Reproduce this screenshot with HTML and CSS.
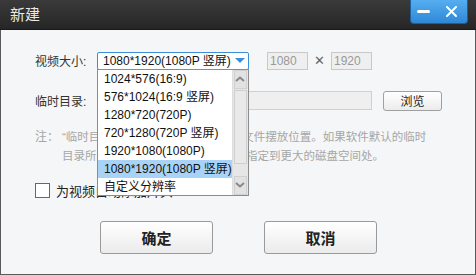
FILE: index.html
```html
<!DOCTYPE html>
<html lang="zh-CN">
<head>
    <meta charset="UTF-8">
    <title>新建</title>
    <link rel="stylesheet" href="styles.css">
</head>
<body>

<div class="window">
    <div class="titlebar">
        <div class="title">新建</div>
        <div class="title-buttons">
            <span class="btn-min"></span>
            <svg class="btn-close" width="11" height="11" viewBox="0 0 11 11">
                <path d="M1 1L10 10M10 1L1 10" stroke="#fff" stroke-width="2" stroke-linecap="round"/>
            </svg>
        </div>
    </div>

    <div class="content">
        <div class="row">
            <div class="label">视频大小:</div>
            <div class="select">
                <span class="select-text">1080*1920(1080P 竖屏)</span>
                <span class="select-arrow"></span>

                <div class="dropdown">
                    <ul class="options">
                        <li>1024*576(16:9)</li>
                        <li>576*1024(16:9 竖屏)</li>
                        <li>1280*720(720P)</li>
                        <li>720*1280(720P 竖屏)</li>
                        <li>1920*1080(1080P)</li>
                        <li class="selected">1080*1920(1080P 竖屏)</li>
                        <li>自定义分辨率</li>
                    </ul>
                    <div class="scrollbar">
                        <div class="scroll-btn">
                            <svg width="10" height="6" viewBox="0 0 10 6"><path d="M1 5L5 1.5L9 5" fill="none" stroke="#888" stroke-width="2"/></svg>
                        </div>
                        <div class="scroll-thumb"></div>
                        <div class="scroll-track"></div>
                        <div class="scroll-btn">
                            <svg width="10" height="6" viewBox="0 0 10 6"><path d="M1 1L5 4.5L9 1" fill="none" stroke="#888" stroke-width="2"/></svg>
                        </div>
                    </div>
                </div>
            </div>
            <div class="size-box">1080</div>
            <div class="times">✕</div>
            <div class="size-box">1920</div>
        </div>

        <div class="row row-dir">
            <div class="label">临时目录:</div>
            <div class="dir-input"></div>
            <button class="browse">浏览</button>
        </div>

        <div class="note">
            <div class="note-head">注：</div>
            <div class="note-text">“临时目录”是视频合成过程中的临时文件摆放位置。如果软件默认的临时<br>目录所在的磁盘空间不够时，请将其指定到更大的磁盘空间处。</div>
        </div>

        <div class="check-row">
            <span class="checkbox"></span>
            <span class="check-label">为视频自动添加片头</span>
        </div>

        <div class="actions">
            <button class="action">确定</button>
            <button class="action">取消</button>
        </div>
    </div>
</div>

</body>
</html>
```

FILE: styles.css
```css
body {
    margin: 0;
    font-family: "Liberation Sans", "Noto Sans CJK SC", sans-serif;
    font-size: 12px;
    background-color: #ffffff;
}

.window {
    width: 476px;
    height: 275px;
    box-sizing: border-box;
    border: 1px solid #5a5a5a;
    border-top: none;
    background-color: #f5f6f7;
    display: flex;
    flex-direction: column;
}

/* Title bar */
.titlebar {
    height: 29px;
    margin: 0 -1px;
    background: linear-gradient(#3a3a3a, #262626);
    border-bottom: 1px solid #1a1a1a;
    display: flex;
    align-items: flex-start;
    flex-shrink: 0;
}

.title {
    color: #e8e8e8;
    font-size: 15px;
    line-height: 29px;
    padding-left: 10px;
}

.title-buttons {
    margin-left: auto;
    margin-right: 8px;
    width: 58px;
    height: 24px;
    box-sizing: border-box;
    border: 1px solid #1f5f99;
    border-top: none;
    border-radius: 0 0 4px 4px;
    background: linear-gradient(#56aef0, #2e88d6);
    display: flex;
    align-items: center;
    padding-left: 6px;
}

.btn-min {
    width: 13px;
    height: 3px;
    border-radius: 2px;
    background-color: #fff;
}

.btn-close {
    margin-left: 16px;
}

/* Form */
.content {
    padding: 21px 0 0 34px;
    color: #333;
}

.row {
    display: flex;
    align-items: center;
    height: 19px;
}

.label {
    width: 62px;
    font-size: 12px;
    color: #333;
}

.select {
    position: relative;
    width: 152px;
    height: 18px;
    box-sizing: border-box;
    border: 1px solid #3d8ed8;
    border-radius: 2px;
    background-color: #fff;
    display: flex;
    align-items: center;
    padding-left: 5px;
    color: #111;
}

.select-text {
    line-height: 16px;
    white-space: nowrap;
}

.select-arrow {
    margin-left: auto;
    margin-right: 3px;
    flex-shrink: 0;
    width: 0;
    height: 0;
    border-left: 5px solid transparent;
    border-right: 5px solid transparent;
    border-top: 5px solid #3b8fd9;
}

.size-box {
    width: 41px;
    height: 18px;
    box-sizing: border-box;
    border: 1px solid #c8c8c8;
    background-color: #efefef;
    color: #999;
    line-height: 16px;
    padding-left: 2px;
}

.select + .size-box {
    margin-left: 18px;
}

.times {
    width: 23px;
    text-align: center;
    color: #666;
    font-size: 13px;
}

.row-dir {
    margin-top: 21px;
}

.dir-input {
    width: 275px;
    height: 19px;
    box-sizing: border-box;
    border: 1px solid #d0d0d0;
    background-color: #efefef;
}

.browse {
    margin-left: 11px;
    width: 59px;
    height: 20px;
    padding: 0;
    border: 1px solid #a0a0a0;
    border-radius: 3px;
    background: linear-gradient(#ffffff, #ececec);
    font-family: inherit;
    font-size: 12px;
    color: #222;
}

.note {
    display: flex;
    margin-top: 18px;
    color: #a6a6a6;
    line-height: 19px;
}

.note-head {
    width: 27px;
    flex-shrink: 0;
    font-size: 12px;
}

.note-text {
    white-space: nowrap;
    font-size: 11.5px;
}

.check-row {
    display: flex;
    align-items: center;
    margin-top: 15px;
    color: #222;
    font-size: 13px;
}

.checkbox {
    width: 15px;
    height: 15px;
    box-sizing: border-box;
    border: 1px solid #2f74c0;
    background-color: #fff;
    margin-right: 6px;
}

.actions {
    display: flex;
    margin-top: 21px;
    padding-left: 65px;
    gap: 51px;
}

.action {
    width: 113px;
    height: 33px;
    border: 1px solid #9a9a9a;
    border-radius: 3px;
    background: linear-gradient(#ffffff, #ebebeb);
    font-family: inherit;
    font-size: 15px;
    font-weight: bold;
    color: #222;
}

/* Open dropdown list */
.dropdown {
    position: absolute;
    top: 16px;
    left: -1px;
    width: 152px;
    height: 127px;
    box-sizing: border-box;
    border: 1px solid #8c8c8c;
    background-color: #fff;
    display: flex;
}

.options {
    list-style: none;
    margin: 0;
    padding: 0;
    flex: 1;
}

.options li {
    height: 18px;
    line-height: 18px;
    padding-left: 6px;
    color: #111;
    white-space: nowrap;
}

.options li.selected {
    background-color: #a9d3f6;
}

.scrollbar {
    width: 16px;
    background-color: #e6e6e6;
    display: flex;
    flex-direction: column;
    border-left: 1px solid #dedede;
}

.scroll-btn {
    height: 17px;
    margin: 0 1px;
    border: 1px solid #d0d0d0;
    background-color: #e2e2e2;
    display: flex;
    align-items: center;
    justify-content: center;
}

.scroll-thumb {
    height: 72px;
    margin: 1px 1px 0;
    border: 1px solid #cfcfcf;
    background-color: #e9e9e9;
}

.scroll-track {
    flex: 1;
}
```
